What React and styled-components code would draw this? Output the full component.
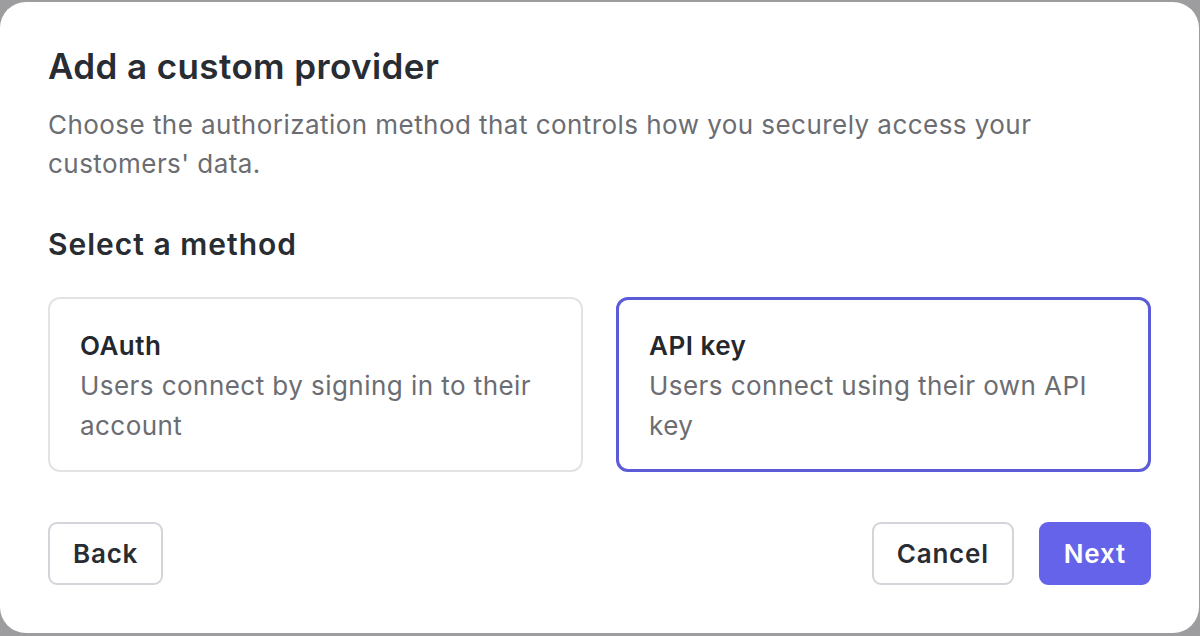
import React, { useState } from 'react';
import styled, { createGlobalStyle } from 'styled-components';

const GlobalStyle = createGlobalStyle`
  html, body {
    margin: 0;
    padding: 0;
    background: #9d9d9f;
    height: 636px;
    overflow: hidden;
  }
  * { box-sizing: border-box; }
`;

const Backdrop = styled.div`
  width: 1200px;
  height: 636px;
  padding: 2px 1px 3px 0;
  display: flex;
`;

const Dialog = styled.div`
  flex: 1;
  background: #ffffff;
  border-radius: 26px;
  padding: 44px 48px 48px 48px;
  display: flex;
  flex-direction: column;
  font-family: Inter, "Noto Sans", sans-serif;
  color: #282c33;
`;

const Title = styled.h1`
  margin: 0;
  font-size: 35px;
  line-height: 40px;
  font-weight: 600;
  letter-spacing: 0.4px;
`;

const Subtitle = styled.p`
  margin: 19px 0 0 0;
  font-size: 26px;
  line-height: 39px;
  font-weight: 400;
  letter-spacing: 0.45px;
  color: #6b6d72;
`;

const SectionTitle = styled.h2`
  margin: 42px 0 0 0;
  font-size: 30px;
  line-height: 38px;
  font-weight: 600;
  letter-spacing: 1px;
`;

const Options = styled.div`
  margin-top: 34px;
  display: grid;
  grid-template-columns: 1fr 1fr;
  gap: 33px;
`;

const OptionCard = styled.button`
  text-align: left;
  font-family: inherit;
  background: #ffffff;
  height: 175px;
  padding: ${({ selected }) => (selected ? '26px 30px' : '27px 30px')};
  border-radius: 12px;
  border: ${({ selected }) => (selected ? '3px solid #5c5bd8' : '2px solid #e3e3e6')};
  display: flex;
  flex-direction: column;
  cursor: pointer;
`;

const OptionName = styled.span`
  font-size: 26px;
  line-height: 40px;
  font-weight: 600;
  letter-spacing: 0.5px;
  color: #24272d;
`;

const OptionDesc = styled.span`
  font-size: 26px;
  line-height: 40px;
  letter-spacing: 0.45px;
  color: #6b6d72;
`;

const Footer = styled.div`
  margin-top: auto;
  display: flex;
  align-items: center;
  justify-content: space-between;
`;

const RightButtons = styled.div`
  display: flex;
  gap: 25px;
`;

const Button = styled.button`
  height: 63px;
  padding: 0 23px;
  border-radius: 9px;
  font-family: inherit;
  font-size: 26px;
  font-weight: 600;
  letter-spacing: 0.8px;
  cursor: pointer;
  border: ${({ primary }) => (primary ? '2px solid #6463e9' : '2px solid #d4d4da')};
  background: ${({ primary }) => (primary ? '#6463e9' : '#ffffff')};
  color: ${({ primary }) => (primary ? '#ffffff' : '#282c33')};
`;

const methods = [
  { id: 'oauth', name: 'OAuth', desc: 'Users connect by signing in to their account' },
  { id: 'apikey', name: 'API key', desc: 'Users connect using their own API key' },
];

const App = () => {
  const [method, setMethod] = useState('apikey');

  return (
    <Backdrop>
      <GlobalStyle />
      <Dialog>
        <Title>Add a custom provider</Title>
        <Subtitle>
          Choose the authorization method that controls how you securely access your customers' data.
        </Subtitle>
        <SectionTitle>Select a method</SectionTitle>
        <Options>
          {methods.map((m) => (
            <OptionCard key={m.id} selected={method === m.id} onClick={() => setMethod(m.id)}>
              <OptionName>{m.name}</OptionName>
              <OptionDesc>{m.desc}</OptionDesc>
            </OptionCard>
          ))}
        </Options>
        <Footer>
          <Button>Back</Button>
          <RightButtons>
            <Button>Cancel</Button>
            <Button primary>Next</Button>
          </RightButtons>
        </Footer>
      </Dialog>
    </Backdrop>
  );
};

export default App;
